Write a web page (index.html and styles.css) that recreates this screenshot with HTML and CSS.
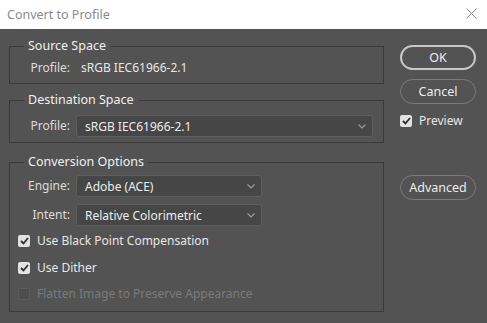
FILE: index.html
```html
<!DOCTYPE html>
<html>
<head>
<meta charset="utf-8">
<link rel="stylesheet" href="styles.css">
</head>
<body>
<div class="dialog">
  <div class="titlebar">
    <span class="title">Convert to Profile</span>
    <svg class="close" width="11" height="11" viewBox="0 0 11 11"><path d="M0.5 0.5 L10.5 10.5 M10.5 0.5 L0.5 10.5" stroke="#8a8a8a" stroke-width="1" fill="none"/></svg>
  </div>
  <div class="main">
    <div class="left">
      <fieldset class="group source">
        <legend>Source Space</legend>
        <div class="row">
          <span class="label">Profile:</span>
          <span class="value">sRGB IEC61966-2.1</span>
        </div>
      </fieldset>
      <fieldset class="group dest">
        <legend>Destination Space</legend>
        <div class="row">
          <span class="label">Profile:</span>
          <div class="select wide"><span>sRGB IEC61966-2.1</span><svg class="chev" width="8" height="5" viewBox="0 0 8 5"><path d="M0.5 0.5 L4 4 L7.5 0.5" stroke="#9a9a9a" stroke-width="1.2" fill="none"/></svg></div>
        </div>
      </fieldset>
      <fieldset class="group conv">
        <legend>Conversion Options</legend>
        <div class="row">
          <span class="label">Engine:</span>
          <div class="select narrow"><span>Adobe (ACE)</span><svg class="chev" width="8" height="5" viewBox="0 0 8 5"><path d="M0.5 0.5 L4 4 L7.5 0.5" stroke="#9a9a9a" stroke-width="1.2" fill="none"/></svg></div>
        </div>
        <div class="row intent">
          <span class="label">Intent:</span>
          <div class="select narrow"><span>Relative Colorimetric</span><svg class="chev" width="8" height="5" viewBox="0 0 8 5"><path d="M0.5 0.5 L4 4 L7.5 0.5" stroke="#9a9a9a" stroke-width="1.2" fill="none"/></svg></div>
        </div>
        <div class="check bpc"><span class="box on"><svg width="9" height="8" viewBox="0 0 9 8"><path d="M1 4 L3.5 6.5 L8 1" stroke="#2e2e2e" stroke-width="1.8" fill="none"/></svg></span>Use Black Point Compensation</div>
        <div class="check dither"><span class="box on"><svg width="9" height="8" viewBox="0 0 9 8"><path d="M1 4 L3.5 6.5 L8 1" stroke="#2e2e2e" stroke-width="1.8" fill="none"/></svg></span>Use Dither</div>
        <div class="check flatten disabled"><span class="box off"></span>Flatten Image to Preserve Appearance</div>
      </fieldset>
    </div>
    <div class="right">
      <div class="btn ok">OK</div>
      <div class="btn cancel">Cancel</div>
      <div class="check preview"><span class="box on"><svg width="9" height="8" viewBox="0 0 9 8"><path d="M1 4 L3.5 6.5 L8 1" stroke="#2e2e2e" stroke-width="1.8" fill="none"/></svg></span>Preview</div>
      <div class="btn advanced">Advanced</div>
    </div>
  </div>
</div>
</body>
</html>
```
FILE: styles.css
```css
html, body {
  margin: 0;
  padding: 0;
  background: #535353;
}
body {
  width: 487px;
  height: 323px;
  overflow: hidden;
  font-family: "Noto Sans", "Open Sans", sans-serif;
  font-size: 12px;
  color: #e0e0e0;
}
.dialog {
  width: 487px;
  height: 323px;
}
.titlebar {
  height: 29px;
  background: #ffffff;
  display: flex;
  align-items: center;
  justify-content: space-between;
  padding: 0 10px 0 7px;
  box-sizing: border-box;
}
.title {
  color: #8a8a8a;
  font-size: 12.5px;
  margin-top: -1px;
}
.close {
  margin-top: -3px;
}
.main {
  display: flex;
  padding-left: 9px;
}
.left {
  width: 375px;
  display: flex;
  flex-direction: column;
}
.group {
  margin: 0;
  border: 1px solid #3a3a3a;
  padding: 0 8px;
  min-width: 0;
}
.group legend {
  padding: 0 4px;
  margin-left: 6px;
  line-height: 16px;
  color: #f0f0f0;
  font-size: 12.5px;
}
.source {
  margin-top: 9px;
  padding-top: 6px;
  padding-bottom: 7px;
}
.dest {
  margin-top: 8px;
  padding-top: 7px;
  padding-bottom: 5px;
}
.conv {
  margin-top: 11px;
  padding-top: 5px;
  padding-bottom: 8px;
}
.row {
  display: flex;
  align-items: center;
  gap: 6px;
}
.label {
  width: 52px;
  text-align: right;
  flex: none;
  line-height: 16px;
  color: #dcdcdc;
}
.value {
  padding-left: 5px;
  line-height: 16px;
  color: #e6e6e6;
}
.select {
  height: 22px;
  box-sizing: border-box;
  border: 1px solid #5e5e5e;
  border-radius: 3px;
  background: #464646;
  display: flex;
  align-items: center;
  justify-content: space-between;
  padding: 0 6px 0 8px;
  color: #ececec;
}
.select.wide { width: 297px; }
.select.narrow { width: 186px; }
.chev { flex: none; }
.intent { margin-top: 7px; }
.check {
  display: flex;
  align-items: center;
  gap: 7px;
  height: 18px;
  line-height: 18px;
  color: #e6e6e6;
}
.box {
  width: 12px;
  height: 12px;
  box-sizing: border-box;
  border-radius: 2px;
  display: flex;
  align-items: center;
  justify-content: center;
  flex: none;
}
.box.on {
  background: #e2e2e2;
}
.box.off {
  border: 1px solid #5c5c5c;
  background: #4e4e4e;
}
.bpc { margin-top: 6px; }
.dither { margin-top: 9px; }
.flatten { margin-top: 8px; }
.disabled { color: #7a7a7a; }
.right {
  margin-left: 16px;
  width: 76px;
  display: flex;
  flex-direction: column;
}
.btn {
  height: 25px;
  box-sizing: border-box;
  border-radius: 13px;
  display: flex;
  align-items: center;
  justify-content: center;
  color: #ececec;
  font-size: 12.5px;
}
.ok {
  margin-top: 16px;
  border: 2px solid #c8c8c8;
}
.cancel {
  margin-top: 9px;
  border: 1px solid #7a7a7a;
}
.preview {
  margin-top: 8px;
  gap: 7px;
}
.advanced {
  margin-top: 45px;
  border: 1px solid #7a7a7a;
}
```
